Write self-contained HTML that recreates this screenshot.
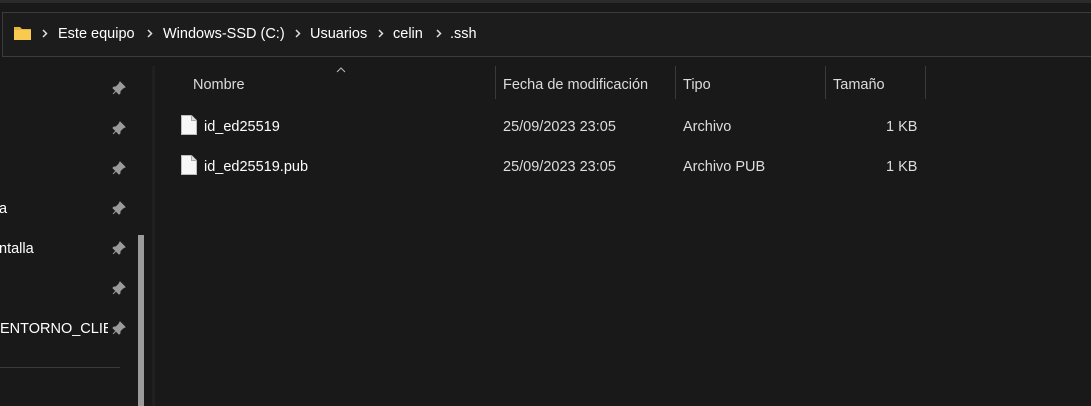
<!DOCTYPE html><html><head><style>
body{margin:0;width:1091px;height:406px;background:#191919;font-family:"Liberation Sans",sans-serif;color:#fff;position:relative;overflow:hidden;font-size:14.5px}
.a{position:absolute}
.t{position:absolute;white-space:nowrap}
.pin{position:absolute;left:112px;width:14px;height:14px}
.sep{position:absolute;top:66px;height:33px;width:1px;background:#3a3a3a}
.ch{position:absolute;top:29px}
</style></head><body>
<div class="a" style="left:0;top:0;width:1091px;height:3px;background:#2b2b2b"></div>
<div class="a" style="left:2px;top:12px;width:1100px;height:43px;border:1px solid #3c3c3c;background:#1c1c1c"></div>
<svg class="a" style="left:13px;top:25px" width="20" height="16"><path d="M1 2h6l2 2h9v11H1z" fill="#e8b440"/><path d="M1 5h17v10H1z" fill="#f8ca4f"/></svg>
<svg class="ch" style="left:42px" width="6" height="9"><path d="M1 1l3.5 3.5L1 8" stroke="#ddd" stroke-width="1.5" fill="none"/></svg>
<div class="t" style="left:58px;top:26px">Este equipo</div>
<svg class="ch" style="left:147px" width="6" height="9"><path d="M1 1l3.5 3.5L1 8" stroke="#ddd" stroke-width="1.5" fill="none"/></svg>
<div class="t" style="left:163px;top:26px">Windows-SSD (C:)</div>
<svg class="ch" style="left:295px" width="6" height="9"><path d="M1 1l3.5 3.5L1 8" stroke="#ddd" stroke-width="1.5" fill="none"/></svg>
<div class="t" style="left:310px;top:26px">Usuarios</div>
<svg class="ch" style="left:378px" width="6" height="9"><path d="M1 1l3.5 3.5L1 8" stroke="#ddd" stroke-width="1.5" fill="none"/></svg>
<div class="t" style="left:393px;top:26px">celin</div>
<svg class="ch" style="left:436px" width="6" height="9"><path d="M1 1l3.5 3.5L1 8" stroke="#ddd" stroke-width="1.5" fill="none"/></svg>
<div class="t" style="left:450px;top:26px">.ssh</div>
<div class="a" style="left:152px;top:66px;width:3px;height:340px;background:#202020"></div>
<div class="a" style="left:138px;top:235px;width:6px;height:171px;background:#9b9b9b"></div>
<div class="a" style="left:0;top:367px;width:120px;height:1px;background:#3a3a3a"></div>
<svg class="pin" style="top:81px" viewBox="0 0 14 14"><path d="M8 1l5 5-2 1-3 3 0 2-1 1-6-6 1-1 2 0 3-3z M4 10L1 13" fill="#9a9a9a" stroke="#9a9a9a"/></svg>
<svg class="pin" style="top:121px" viewBox="0 0 14 14"><path d="M8 1l5 5-2 1-3 3 0 2-1 1-6-6 1-1 2 0 3-3z M4 10L1 13" fill="#9a9a9a" stroke="#9a9a9a"/></svg>
<svg class="pin" style="top:161px" viewBox="0 0 14 14"><path d="M8 1l5 5-2 1-3 3 0 2-1 1-6-6 1-1 2 0 3-3z M4 10L1 13" fill="#9a9a9a" stroke="#9a9a9a"/></svg>
<svg class="pin" style="top:201px" viewBox="0 0 14 14"><path d="M8 1l5 5-2 1-3 3 0 2-1 1-6-6 1-1 2 0 3-3z M4 10L1 13" fill="#9a9a9a" stroke="#9a9a9a"/></svg>
<svg class="pin" style="top:241px" viewBox="0 0 14 14"><path d="M8 1l5 5-2 1-3 3 0 2-1 1-6-6 1-1 2 0 3-3z M4 10L1 13" fill="#9a9a9a" stroke="#9a9a9a"/></svg>
<svg class="pin" style="top:281px" viewBox="0 0 14 14"><path d="M8 1l5 5-2 1-3 3 0 2-1 1-6-6 1-1 2 0 3-3z M4 10L1 13" fill="#9a9a9a" stroke="#9a9a9a"/></svg>
<svg class="pin" style="top:321px" viewBox="0 0 14 14"><path d="M8 1l5 5-2 1-3 3 0 2-1 1-6-6 1-1 2 0 3-3z M4 10L1 13" fill="#9a9a9a" stroke="#9a9a9a"/></svg>
<div class="t" style="left:-1px;top:201px">a</div>
<div class="t" style="left:-1px;top:241px">ntalla</div>
<div class="t" style="left:0;top:321px;width:108px;overflow:hidden">ENTORNO_CLIENTE</div>
<svg class="a" style="left:336px;top:67px" width="10" height="6"><path d="M1 5l4-4 4 4" stroke="#bbb" fill="none"/></svg>
<div class="t" style="left:193px;top:77px;color:#dcdcdc">Nombre</div>
<div class="sep" style="left:495px"></div>
<div class="t" style="left:503px;top:77px;color:#dcdcdc">Fecha de modificación</div>
<div class="sep" style="left:675px"></div>
<div class="t" style="left:683px;top:77px;color:#dcdcdc">Tipo</div>
<div class="sep" style="left:825px"></div>
<div class="t" style="left:833px;top:77px;color:#dcdcdc">Tamaño</div>
<div class="sep" style="left:925px"></div>
<svg class="a" style="left:181px;top:115px" width="16" height="20"><path d="M0.5 0.5h10l5 5v14H0.5z" fill="#f7f7f7" stroke="#bbb"/><path d="M10.5 0.5v5h5" fill="#ddd" stroke="#aaa"/></svg>
<div class="t" style="left:204px;top:119px">id_ed25519</div>
<div class="t" style="left:503px;top:119px;color:#ddd">25/09/2023 23:05</div>
<div class="t" style="left:683px;top:119px;color:#ddd">Archivo</div>
<div class="t" style="left:886px;top:119px;color:#ddd">1 KB</div>
<svg class="a" style="left:181px;top:155px" width="16" height="20"><path d="M0.5 0.5h10l5 5v14H0.5z" fill="#f7f7f7" stroke="#bbb"/><path d="M10.5 0.5v5h5" fill="#ddd" stroke="#aaa"/></svg>
<div class="t" style="left:204px;top:159px">id_ed25519.pub</div>
<div class="t" style="left:503px;top:159px;color:#ddd">25/09/2023 23:05</div>
<div class="t" style="left:683px;top:159px;color:#ddd">Archivo PUB</div>
<div class="t" style="left:886px;top:159px;color:#ddd">1 KB</div>
</body></html>
